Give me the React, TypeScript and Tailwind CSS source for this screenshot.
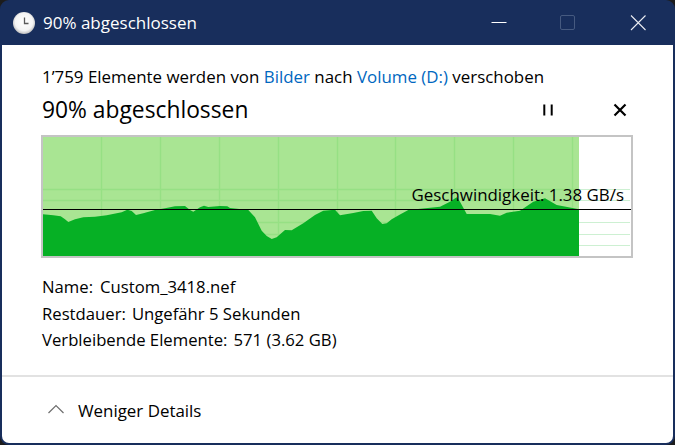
const abs: [number, number][] = [
  [43, 214.3], [53.3, 215.3], [60.7, 216.3], [65, 219.3], [68.3, 222], [75, 219.3], [83.3, 217.3], [95, 216.7],
  [106.7, 215.3], [121.7, 212.3], [127.3, 209.7], [131.7, 211], [136, 215], [143.3, 213.3], [155, 210], [165, 208.3],
  [175, 206.3], [185, 206], [190, 210], [193.3, 211.7], [200, 207.3], [204, 205.7], [208.3, 207], [220, 206],
  [227.3, 206.3], [230, 208], [248.3, 210], [255, 217.3], [261.7, 230.7], [266.7, 236], [271.7, 239], [276.7, 237.3],
  [285, 230], [291.7, 230.3], [303.3, 223.3], [315, 215], [323.3, 210.7], [335, 209.7], [340, 215.3], [353.3, 213],
  [363.3, 211], [371.7, 210.7], [376.7, 218.3], [382.3, 224], [386.7, 223.3], [391.7, 219.3], [400, 214.5], [408.3, 210],
  [440, 206.7], [450, 201.7], [456.7, 197.3], [460, 201.7], [466.7, 214], [490, 214], [500, 215.7], [506.7, 212.7],
  [520, 210.7], [533.3, 201.7], [545, 198.3], [556.7, 205], [579, 209.3],
];
const profile = abs.map(([x, y]) => `${x - 43},${y - 137}`).join(" ") + " 536,119 0,119";
const vLines = [58, 117, 176, 235, 294, 352, 411, 470, 529];
const hLines = [52, 63, 85, 97, 108];

function Chart() {
  return (
    <svg width="588" height="119" viewBox="0 0 588 119" className="block">
      <rect x="0" y="0" width="536" height="119" fill="#a9e593" />
      <g strokeWidth="1.4">
        {vLines.map((x) => (
          <line key={x} x1={x + 0.5} y1="0" x2={x + 0.5} y2="119" stroke="#96e084" />
        ))}
        {hLines.map((y) => (
          <line key={y} x1="0" y1={y + 0.5} x2="536" y2={y + 0.5} stroke="#96e084" />
        ))}
      </g>
      <g shapeRendering="crispEdges" strokeWidth="1">
        {hLines.map((y) => (
          <line key={"r" + y} x1="536" y1={y + 0.5} x2="587" y2={y + 0.5} stroke="#cdf0d2" />
        ))}
      </g>
      <polygon points={profile} fill="#06b025" />
      <line x1="0" y1="72.5" x2="588" y2="72.5" stroke="#000" strokeWidth="1" shapeRendering="crispEdges" />
    </svg>
  );
}

function ClockIcon() {
  return (
    <svg width="24" height="24" viewBox="0 0 24 24" className="shrink-0">
      <defs>
        <radialGradient id="face" cx="0.5" cy="0.45" r="0.55">
          <stop offset="0" stopColor="#ffffff" />
          <stop offset="0.72" stopColor="#f4f4f4" />
          <stop offset="1" stopColor="#bdbdbd" />
        </radialGradient>
      </defs>
      <circle cx="12" cy="12" r="11" fill="url(#face)" />
      <path d="M12.5 6.5V12.5H16.5" fill="none" stroke="#5a5a5a" strokeWidth="1.3" />
    </svg>
  );
}

export default function App() {
  return (
    <div
      className="w-[675px] h-[445px] bg-[#1c1c1c] text-black overflow-hidden"
      style={{ fontFamily: '"Open Sans", "Noto Sans", sans-serif' }}
    >
      <div className="w-full h-full rounded-[9px] bg-[#182e5c] flex flex-col overflow-hidden">
        <div className="h-[45px] shrink-0 flex items-center pl-[12px] text-white">
          <ClockIcon />
          <span className="ml-[7px] text-[17px] leading-none">90% abgeschlossen</span>
          <div className="ml-auto flex items-center">
            <svg width="16" height="16" viewBox="0 0 16 16" className="mr-[53px]">
              <path d="M0.5 7.5H15.5" stroke="#fff" strokeWidth="1" />
            </svg>
            <svg width="16" height="16" viewBox="0 0 16 16" className="mr-[54px]">
              <rect x="0.5" y="0.5" width="14" height="14" rx="1.5" fill="none" stroke="#465a80" strokeWidth="1" />
            </svg>
            <svg width="16" height="16" viewBox="0 0 16 16" className="mr-[29px]">
              <path d="M1 0.5L15.5 15M15.5 0.5L1 15" stroke="#e8ebf1" strokeWidth="1.1" fill="none" />
            </svg>
          </div>
        </div>
        <div className="flex-1 mx-[2px] mb-[2px] bg-white rounded-b-[7px] flex flex-col">
          <div className="pl-[40px] pr-[41px] flex-1">
            <p className="mt-[21px] text-[16.9px] leading-[22px] whitespace-nowrap">
              1’759 Elemente werden von <span className="text-[#0067c0]">Bilder</span> nach{" "}
              <span className="text-[#0067c0]">Volume (D:)</span> verschoben
            </p>
            <div className="mt-[7px] h-[30px] flex items-center">
              <h1 className="text-[22.8px] leading-none font-normal">90% abgeschlossen</h1>
              <div className="ml-auto flex items-center">
                <svg width="12" height="12" viewBox="0 0 12 12" className="mr-[59px]">
                  <path d="M2.3 0.5V11.5M9.7 0.5V11.5" stroke="#000" strokeWidth="2" />
                </svg>
                <svg width="14" height="14" viewBox="0 0 14 14" className="mr-[5px]">
                  <path d="M1.5 1.5L12.5 12.5M12.5 1.5L1.5 12.5" stroke="#000" strokeWidth="2.2" />
                </svg>
              </div>
            </div>
            <div className="relative mt-[10px] -ml-px w-[592px] h-[123px] border-2 border-[#c4c4c4] bg-white">
              <Chart />
              <span className="absolute right-[7px] top-[47px] text-[16.9px] leading-[22px] whitespace-nowrap">
                Geschwindigkeit: 1.38 GB/s
              </span>
            </div>
            <div className="mt-[16px] flex flex-col text-[16.7px] leading-[26.5px]">
              <div className="flex gap-[7px]"><span>Name:</span><span>Custom_3418.nef</span></div>
              <div className="flex gap-[6px]"><span>Restdauer:</span><span>Ungefähr 5 Sekunden</span></div>
              <div className="flex gap-[6px]"><span>Verbleibende Elemente:</span><span>571 (3.62 GB)</span></div>
            </div>
          </div>
          <div className="h-[68px] shrink-0 border-t-2 border-[#e2e2e2] flex items-center pl-[46px] pt-[2px]">
            <svg width="16" height="10" viewBox="0 0 16 10" className="mb-[5px]">
              <path d="M0.5 9L8 1.5L15.5 9" fill="none" stroke="#6e6e6e" strokeWidth="1.2" />
            </svg>
            <span className="ml-[14px] text-[16.9px] leading-none">Weniger Details</span>
          </div>
        </div>
      </div>
    </div>
  );
}
